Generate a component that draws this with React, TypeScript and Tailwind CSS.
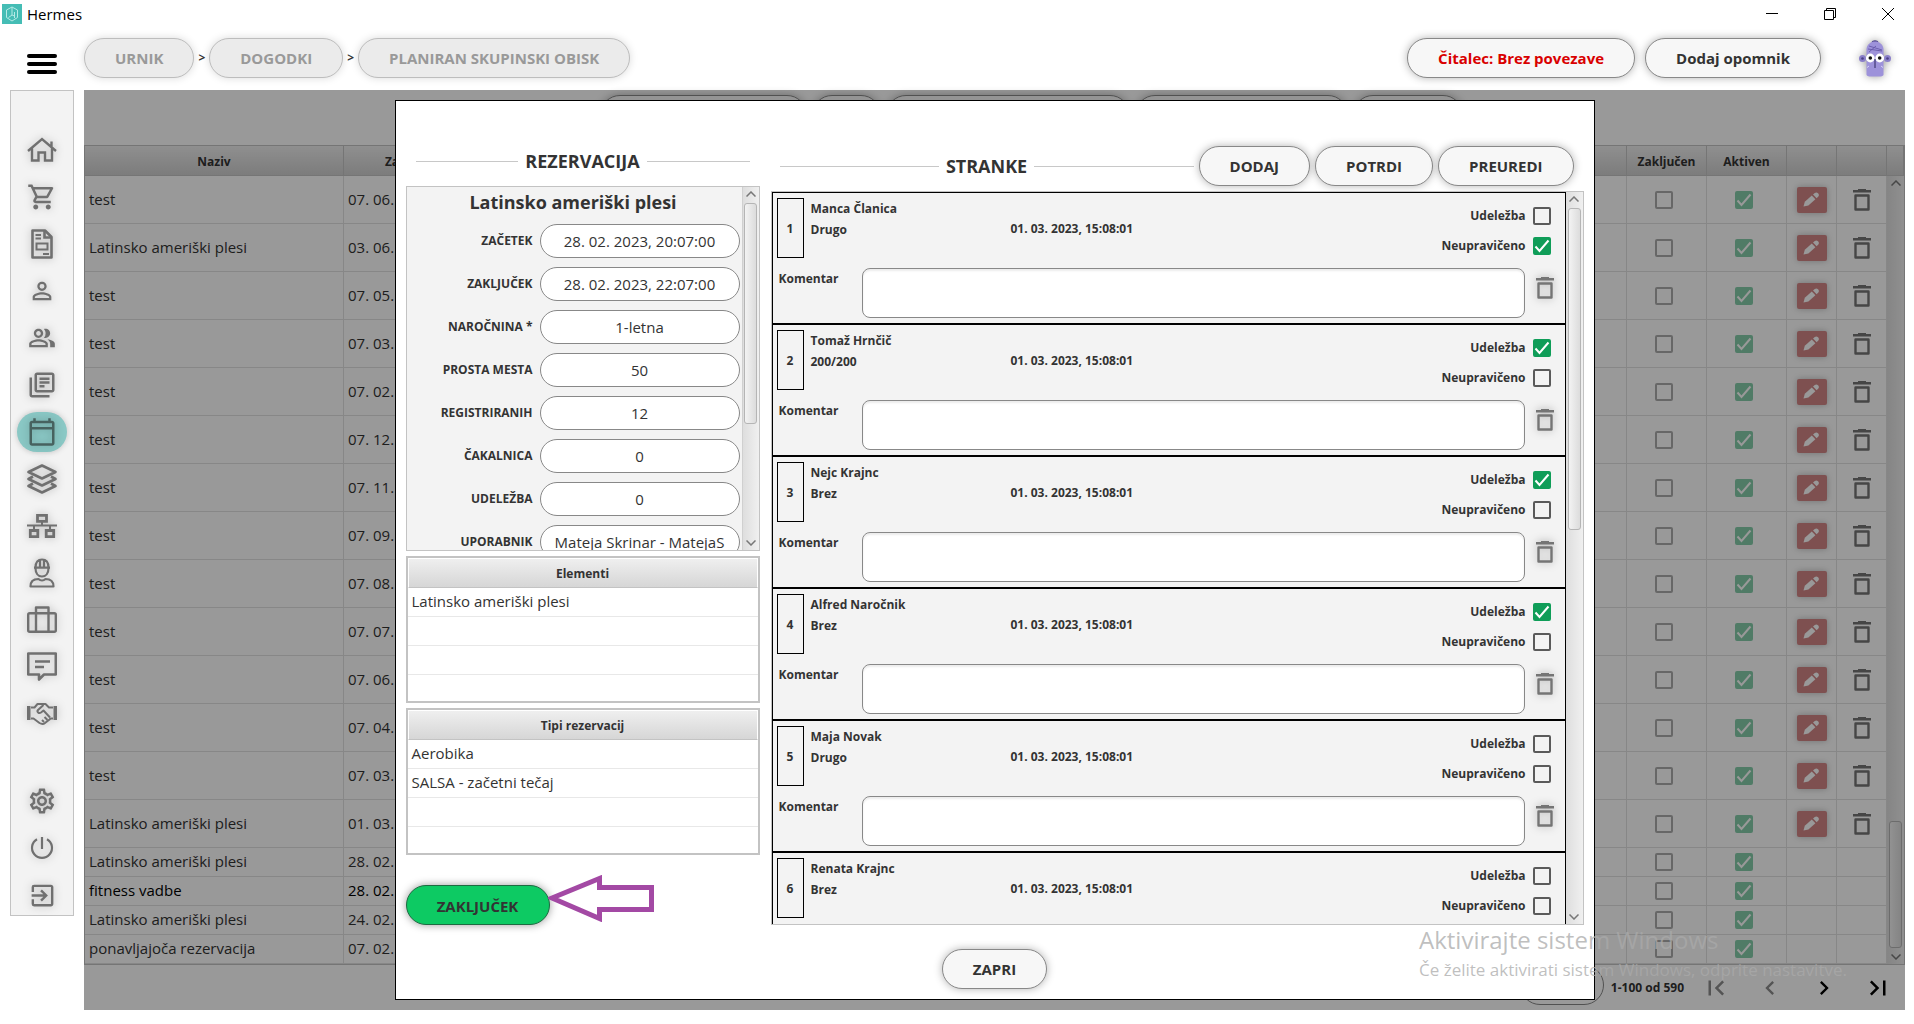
import type { ReactNode } from "react";
import {
  MdOutlineShoppingCart,
  MdPersonOutline,
  MdOutlinePeopleAlt,
  MdOutlineLibraryBooks,
  MdOutlineCalendarToday,
  MdOutlineSettings,
  MdExitToApp,
  MdFirstPage,
  MdLastPage,
  MdChevronLeft,
  MdChevronRight,
} from "react-icons/md";

type Termin = { naziv: string; zacetek: string; urejanje: boolean; poudarjen?: boolean };

const termini: Termin[] = [
  { naziv: "test", zacetek: "07. 06.", urejanje: true },
  { naziv: "Latinsko ameriški plesi", zacetek: "03. 06.", urejanje: true },
  { naziv: "test", zacetek: "07. 05.", urejanje: true },
  { naziv: "test", zacetek: "07. 03.", urejanje: true },
  { naziv: "test", zacetek: "07. 02.", urejanje: true },
  { naziv: "test", zacetek: "07. 12.", urejanje: true },
  { naziv: "test", zacetek: "07. 11.", urejanje: true },
  { naziv: "test", zacetek: "07. 09.", urejanje: true },
  { naziv: "test", zacetek: "07. 08.", urejanje: true },
  { naziv: "test", zacetek: "07. 07.", urejanje: true },
  { naziv: "test", zacetek: "07. 06.", urejanje: true },
  { naziv: "test", zacetek: "07. 04.", urejanje: true },
  { naziv: "test", zacetek: "07. 03.", urejanje: true },
  { naziv: "Latinsko ameriški plesi", zacetek: "01. 03.", urejanje: true },
  { naziv: "Latinsko ameriški plesi", zacetek: "28. 02.", urejanje: false },
  { naziv: "fitness vadbe", zacetek: "28. 02.", urejanje: false, poudarjen: true },
  { naziv: "Latinsko ameriški plesi", zacetek: "24. 02.", urejanje: false },
  { naziv: "ponavljajoča rezervacija", zacetek: "07. 02.", urejanje: false },
];

const polja = [
  { id: "zacetek", label: "ZAČETEK", value: "28. 02. 2023, 20:07:00" },
  { id: "zakljucek", label: "ZAKLJUČEK", value: "28. 02. 2023, 22:07:00" },
  { id: "narocnina", label: "NAROČNINA *", value: "1-letna" },
  { id: "prosta", label: "PROSTA MESTA", value: "50" },
  { id: "registriranih", label: "REGISTRIRANIH", value: "12" },
  { id: "cakalnica", label: "ČAKALNICA", value: "0" },
  { id: "udelezba", label: "UDELEŽBA", value: "0" },
  { id: "uporabnik", label: "UPORABNIK", value: "Mateja Skrinar - MatejaS" },
];

const stranke = [
  { ime: "Manca Članica", vrsta: "Drugo", udelezba: false, neupraviceno: true },
  { ime: "Tomaž Hrnčič", vrsta: "200/200", udelezba: true, neupraviceno: false },
  { ime: "Nejc Krajnc", vrsta: "Brez", udelezba: true, neupraviceno: false },
  { ime: "Alfred Naročnik", vrsta: "Brez", udelezba: true, neupraviceno: false },
  { ime: "Maja Novak", vrsta: "Drugo", udelezba: false, neupraviceno: false },
  { ime: "Renata Krajnc", vrsta: "Brez", udelezba: false, neupraviceno: false },
];

function HomeIcon() {
  return (
    <svg width="30" height="26" viewBox="0 0 30 26" fill="none" stroke="currentColor" strokeWidth="2.4">
      <path d="M1 14 15 2l14 12M24.500 10V4.500M5 11.500V23.500h6.500v-8h6.500v8H25V11.500" />
    </svg>
  );
}

function InvoiceIcon() {
  return (
    <svg width="22" height="30" viewBox="0 0 22 30" fill="none" stroke="currentColor" strokeWidth="2.6">
      <path d="M1.500 1.500H14L20.500 8v20.500h-19z" strokeLinejoin="round" />
      <path d="M13.500 2v6.500h7" />
      <path d="M4.500 6H10M4.500 9.500H10M12 25h6" strokeWidth="1.800" />
      <path d="M5.500 14.500h11v6h-11z" strokeWidth="2" />
    </svg>
  );
}

function LayersIcon() {
  return (
    <svg width="30" height="30" viewBox="0 0 30 30" fill="none" stroke="currentColor" strokeWidth="2.6" strokeLinejoin="round">
      <path d="M15 1.500 28.500 8 15 14.500 1.500 8z" />
      <path d="M6 12.500 1.500 15 15 21.500 28.500 15 24 12.500" />
      <path d="M6 19.500 1.500 22 15 28.500 28.500 22 24 19.500" />
    </svg>
  );
}

function NetworkIcon() {
  return (
    <svg width="30" height="26" viewBox="0 0 30 26" fill="none" stroke="currentColor" strokeWidth="2.8">
      <path d="M10.500 2.300h9v6h-9zM3.300 17.500h7.500v6.200H3.300zM19.200 17.500h7.500v6.200h-7.500z" />
      <path d="M15 8.500v4M7 12.500v5M23 12.500v5M0 12.500h30" strokeWidth="2" />
    </svg>
  );
}

function WorkerIcon() {
  return (
    <svg width="26" height="30" viewBox="0 0 26 30" fill="none" stroke="currentColor" strokeWidth="2.2">
      <path d="M6.500 9.500C6.500 4 9 1.500 13 1.500s6.500 2.500 6.500 8M5 9.700h16M11 2v7M15 2v7" />
      <path d="M6.500 10c0 5 2.500 8.500 6.500 8.500s6.500-3.500 6.500-8.500" />
      <path d="M1.500 28.500c0-4.500 2-7.500 8-7.500 2 1.800 5 1.800 7 0 6 0 8 3 8 7.500z" strokeLinejoin="round" />
    </svg>
  );
}

function SuitcaseIcon() {
  return (
    <svg width="30" height="28" viewBox="0 0 30 28" fill="none" stroke="currentColor" strokeWidth="2.4" strokeLinejoin="round">
      <rect x="1.200" y="7.200" width="27.600" height="18.600" rx="1.500" />
      <path d="M9 25.500V1.500h12.500v24" />
    </svg>
  );
}

function CommentIcon() {
  return (
    <svg width="30" height="30" viewBox="0 0 30 30" fill="none" stroke="currentColor" strokeWidth="2.600" strokeLinejoin="round">
      <path d="M1.200 1.500h27.600v21H17l-5 5v-5H1.200z" />
      <path d="M8 9.500h15M8 15h9" />
    </svg>
  );
}

function HandshakeIcon() {
  return (
    <svg width="30" height="24" viewBox="0 0 30 24" fill="none" stroke="currentColor" strokeWidth="2" strokeLinejoin="round">
      <path d="M0 4h3.500v14H0zM26.500 4H30v14h-3.500z" fill="currentColor" stroke="none" />
      <path d="M4 5.500h3.500l3-3.500h8l3.500 3.500h4M4 16.500h2.500l6 4.500c2 1.200 4 1.200 5.500 0l4.500-3.500 1-1H26" />
      <path d="M16.500 3 11 8c-1.500 1.800.8 4 3 2.500l2.500-2 6.500 7M17 20l-2-2M20.500 18l-3-3" />
    </svg>
  );
}

function PowerIcon() {
  return (
    <svg width="24" height="24" viewBox="0 0 24 24" fill="none" stroke="currentColor" strokeWidth="2.2">
      <path d="M12 1v12M7 3.200a10 10 0 1 0 10 0" />
    </svg>
  );
}

function TrashIcon() {
  return (
    <svg width="18" height="22" viewBox="0 0 18 22" aria-hidden="true">
      <path d="M5 0h8v1h5v2.500H0V1h5z" fill="currentColor" />
      <path d="M2.500 6.500h13v14h-13z" fill="none" stroke="currentColor" strokeWidth="2.400" strokeLinejoin="round" />
    </svg>
  );
}

function PencilIcon() {
  return (
    <svg width="17" height="16" viewBox="0 0 17 16" fill="white" aria-hidden="true">
      <path d="M.5 14.500 1.800 9.800 8.800 3.600 12.400 7.200 5.400 13.400z" />
      <path d="m10 2.600 1.800-1.500c1-.8 2.200-.8 3.200.1 1.100 1 1.200 2.400.3 3.400L13.700 6.200z" />
    </svg>
  );
}

function Avatar() {
  return (
    <svg width="32" height="38" viewBox="0 0 32 38" className="drop-shadow-[0_0_4px_rgba(0,0,0,0.4)]" aria-hidden="true">
      <circle cx="3.500" cy="19.500" r="3.500" fill="#8a7fc9" />
      <circle cx="28.500" cy="19.500" r="3.500" fill="#8a7fc9" />
      <circle cx="3.500" cy="19.500" r="1.300" fill="#4b4187" />
      <circle cx="28.500" cy="19.500" r="1.300" fill="#4b4187" />
      <path d="M12.500 3.500C13 .5 19 .5 19.500 3.500z" fill="#4b4187" />
      <path d="M7.500 10C8 5 12 2.500 16 2.500S24 5 24.500 10v25.500c0 1.500-2 2-4 2h-9c-2 0-4-.5-4-2z" fill="#9d92da" />
      <path d="M10 7l13 4M9 10l14 2M10 13l7-6" stroke="#6558a8" strokeWidth=".9" />
      <circle cx="11.300" cy="19" r="4.400" fill="#fff" />
      <circle cx="20.700" cy="19" r="4.400" fill="#fff" />
      <circle cx="11.300" cy="19" r="1.800" fill="#111" />
      <circle cx="20.700" cy="19" r="1.800" fill="#111" />
      <path d="M16 20v7M15 28h2" stroke="#2d2760" strokeWidth="1" fill="none" />
      <path d="M8 28.500l2-1.500M24 28.500l-2-1.500" stroke="#d9d4f5" strokeWidth="1" />
    </svg>
  );
}

type PillProps = { children?: ReactNode; className?: string; disabled?: boolean };

function PillButton({ children, className = "", disabled }: PillProps) {
  const look = disabled
    ? "border-[#bdbdbd] bg-[#ebebeb] text-[#999] shadow-[0_0_8px_rgba(0,0,0,0.15)]"
    : "border-[#888] bg-[#f7f7f7] shadow-[0_0_8px_rgba(0,0,0,0.3)]";
  return (
    <button
      type="button"
      disabled={disabled}
      className={`h-10 shrink-0 rounded-[20px] border px-[30px] text-[15px] font-bold whitespace-nowrap ${look} ${className}`}
    >
      {children}
    </button>
  );
}

function Checkbox({ checked, label, faded }: { checked: boolean; label: string; faded?: boolean }) {
  return (
    <span className={`grid size-[18px] ${faded ? "opacity-50" : ""}`}>
      <input
        type="checkbox"
        aria-label={label}
        defaultChecked={checked}
        className="peer col-start-1 row-start-1 size-[18px] appearance-none rounded-[2px] border-2 border-[#5a5a5a] checked:border-[#0f9d58] checked:bg-[#0f9d58]"
      />
      <svg
        viewBox="0 0 18 18"
        className="pointer-events-none invisible col-start-1 row-start-1 size-[18px] peer-checked:visible"
        fill="none"
        stroke="white"
        strokeWidth="2"
      >
        <path d="M2.500 9.500 6.500 14 15.500 3.500" />
      </svg>
    </span>
  );
}

function Chevron({ up }: { up?: boolean }) {
  return (
    <svg width="10" height="6" viewBox="0 0 10 6" fill="none" stroke="#777" strokeWidth="1.500" className="shrink-0">
      <path d={up ? "M.5 5.500 5 1l4.500 4.500" : "M.5.5 5 5 9.500.5"} />
    </svg>
  );
}

function Scrollbar({ thumb, className = "" }: { thumb: string; className?: string }) {
  return (
    <div className={`flex shrink-0 flex-col items-center gap-1.5 bg-linear-to-r from-[#dedede] to-[#f0f0f0] py-1 ${className}`}>
      <Chevron up />
      <div className="flex w-full flex-1 flex-col items-center">
        <div className={`w-[13px] rounded-[3px] border border-[#b5b5b5] bg-linear-to-r from-[#f3f3f3] to-[#dcdcdc] ${thumb}`} />
      </div>
      <Chevron />
    </div>
  );
}

function Heading({ children, className = "" }: { children: ReactNode; className?: string }) {
  return (
    <div className={`flex h-10 items-center gap-[7px] ${className}`}>
      <span className="h-px flex-1 bg-[#c8c8c8]" />
      <h2 className="text-[18px] leading-6 font-bold">{children}</h2>
      <span className="h-px flex-1 bg-[#c8c8c8]" />
    </div>
  );
}

function SmallTable({ title, rows }: { title: string; rows: string[] }) {
  return (
    <div className="h-[147px] shrink-0 overflow-hidden border-2 border-[#c3c3c3]">
      <table className="w-full border-separate border-spacing-0 text-[15px]">
        <thead>
          <tr>
            <th className="h-[30px] border border-x-white border-t-white border-b-[#c3c3c3] bg-linear-to-b from-[#efefef] to-[#d6d6d6] pt-0.5 text-[12px] font-bold">
              {title}
            </th>
          </tr>
        </thead>
        <tbody>
          {rows.map((r, i) => (
            <tr key={i}>
              <td className="h-[29px] border-b border-[#e8e8e8] px-1 pb-0.5 leading-5">{r}</td>
            </tr>
          ))}
        </tbody>
      </table>
    </div>
  );
}

function Sidebar() {
  const items = [
    { name: "Domov", icon: <HomeIcon /> },
    { name: "Blagajna", icon: <MdOutlineShoppingCart size={30} /> },
    { name: "Računi", icon: <InvoiceIcon /> },
    { name: "Stranke", icon: <MdPersonOutline size={28} /> },
    { name: "Skupine", icon: <MdOutlinePeopleAlt size={28} /> },
    { name: "Knjižnica", icon: <MdOutlineLibraryBooks size={30} /> },
    { name: "Urnik", icon: <MdOutlineCalendarToday size={30} />, active: true },
    { name: "Sloji", icon: <LayersIcon /> },
    { name: "Omrežje", icon: <NetworkIcon /> },
    { name: "Delavci", icon: <WorkerIcon /> },
    { name: "Kovček", icon: <SuitcaseIcon /> },
    { name: "Sporočila", icon: <CommentIcon /> },
    { name: "Partnerji", icon: <HandshakeIcon /> },
    { name: "Nastavitve", icon: <MdOutlineSettings size={30} />, gap: true },
    { name: "Izklop", icon: <PowerIcon /> },
    { name: "Odjava", icon: <MdExitToApp size={29} /> },
  ];
  return (
    <nav className="flex w-16 shrink-0 flex-col items-center gap-[7px] self-start border border-[#c3c3c3] bg-[#f3f3f3] pt-[39px]">
      {items.map((item) => (
        <button
          key={item.name}
          type="button"
          aria-label={item.name}
          className={`flex h-10 w-[50px] items-center justify-center rounded-[20px] ${
            item.active ? "bg-[#8ac8c5] text-[#47625f] shadow-[0_0_6px_rgba(0,0,0,0.2)]" : "text-[#707070]"
          } ${item.gap ? "mt-10" : ""}`}
        >
          <span className="drop-shadow-[0_0_4px_rgba(0,0,0,0.25)]">{item.icon}</span>
        </button>
      ))}
    </nav>
  );
}

function EventsTable() {
  const th = "h-[30px] border-r border-b border-[#c3c3c3] bg-linear-to-b from-[#efefef] to-[#cfcfcf] pt-0.5 text-[12px] font-bold";
  const td = "border-r border-b border-[#e2e2e2]";
  return (
    <div className="border border-[#c3c3c3]">
      <table className="w-full table-fixed border-separate border-spacing-0 text-[15px]">
        <thead>
          <tr>
            <th className={`w-[259px] ${th}`}>Naziv</th>
            <th className={`w-[130px] ${th}`}>Začetek</th>
            <th className={th} />
            <th className={`w-20 ${th}`}>Zaključen</th>
            <th className={`w-20 ${th}`}>Aktiven</th>
            <th className={`w-[50px] ${th}`} />
            <th className={`w-[50px] ${th}`} />
            <th className={`w-[17px] ${th}`} />
          </tr>
        </thead>
        <tbody>
          {termini.map((t, i) => (
            <tr key={i} className={`${t.urejanje ? "h-12" : "h-[29px]"} ${t.poudarjen ? "text-black" : ""}`}>
              <td className={`pb-0.5 pl-1 leading-5 ${td}`}>{t.naziv}</td>
              <td className={`pb-0.5 pl-1 leading-5 ${td}`}>{t.zacetek}</td>
              <td className={td} />
              <td className={`pr-1.5 ${td}`}>
                <div className="flex justify-center">
                  <Checkbox checked={false} label="Zaključen" faded />
                </div>
              </td>
              <td className={`pr-1.5 ${td}`}>
                <div className="flex justify-center">
                  <Checkbox checked label="Aktiven" faded />
                </div>
              </td>
              <td className={td}>
                {t.urejanje && (
                  <button
                    type="button"
                    aria-label="Uredi"
                    className="mx-auto flex h-[26px] w-[30px] items-center justify-center rounded-[2px] bg-[#d28686] shadow-[0_0_6px_rgba(0,0,0,0.25)]"
                  >
                    <PencilIcon />
                  </button>
                )}
              </td>
              <td className={td}>
                {t.urejanje && (
                  <button type="button" aria-label="Izbriši" className="mx-auto flex text-[#757575]">
                    <TrashIcon />
                  </button>
                )}
              </td>
              {i === 0 && (
                <td rowSpan={termini.length} className="h-px">
                  <Scrollbar className="h-[788px]" thumb="mt-auto h-[127px]" />
                </td>
              )}
            </tr>
          ))}
        </tbody>
      </table>
    </div>
  );
}

function ClientCard({ stranka, index }: { stranka: (typeof stranke)[number]; index: number }) {
  return (
    <div className="flex shrink-0 flex-col gap-2.5 border border-black bg-[#f3f3f3] px-1 py-[5px] text-[12px] font-bold">
      <div className="flex h-[60px] items-center">
        <div className="flex h-[60px] w-[27px] items-center justify-center border border-black pt-0.5">{index + 1}</div>
        <div className="ml-[7px] w-[200px] self-start leading-[21px]">
          <div>{stranka.ime}</div>
          <div>{stranka.vrsta}</div>
        </div>
        <div className="pt-0.5">01. 03. 2023, 15:08:01</div>
        <div className="ml-auto flex flex-col gap-3 self-start pt-[9px] pr-2.5">
          <label className="flex h-[18px] items-center justify-end gap-[7px]">
            Udeležba
            <Checkbox checked={stranka.udelezba} label="Udeležba" />
          </label>
          <label className="flex h-[18px] items-center justify-end gap-[7px]">
            Neupravičeno
            <Checkbox checked={stranka.neupraviceno} label="Neupravičeno" />
          </label>
        </div>
      </div>
      <div className="flex items-start">
        <label htmlFor={`komentar-${index}`} className="w-[85px] pl-0.5 leading-[21px]">
          Komentar
        </label>
        <textarea
          id={`komentar-${index}`}
          className="h-[50px] flex-1 resize-none rounded-lg border border-[#888] bg-white p-2 shadow-[inset_0_2px_2px_rgba(0,0,0,0.08)]"
        />
        <button
          type="button"
          aria-label="Odstrani stranko"
          className="mt-[9px] mr-[7px] ml-[11px] text-[#757575] drop-shadow-[0_0_4px_rgba(0,0,0,0.3)]"
        >
          <TrashIcon />
        </button>
      </div>
    </div>
  );
}

function ReservationDialog() {
  return (
    <div role="dialog" aria-label="Rezervacija" className="flex w-[1200px] flex-col border border-black bg-white px-2.5 pt-10 pb-2.5">
      <div className="flex min-h-0 flex-1 gap-[11px]">
        {/* left column */}
        <div className="flex w-[354px] shrink-0 flex-col">
          <Heading className="mb-[5px] px-2.5">REZERVACIJA</Heading>
          <div className="mb-[5px] flex min-h-0 flex-1 overflow-hidden border border-[#c3c3c3] bg-[#f3f3f3]">
            <div className="flex-1 pr-0.5">
              <h3 className="h-[37px] pt-[3px] text-center text-[18px] leading-6 font-bold">Latinsko ameriški plesi</h3>
              <div className="flex flex-col gap-[9px]">
                {polja.map((p) => (
                  <div key={p.id} className="flex items-center justify-end gap-[7px]">
                    <label htmlFor={p.id} className="text-[12px] font-bold">
                      {p.label}
                    </label>
                    <input
                      id={p.id}
                      defaultValue={p.value}
                      className="h-[34px] w-[200px] rounded-[17px] border border-[#888] bg-white text-center text-[15px]"
                    />
                  </div>
                ))}
              </div>
            </div>
            <Scrollbar className="w-[17px] border-l border-[#d0d0d0]" thumb="h-[221px]" />
          </div>
          <div className="mb-[30px] flex flex-col gap-[5px]">
            <SmallTable title="Elementi" rows={["Latinsko ameriški plesi", "", "", ""]} />
            <SmallTable title="Tipi rezervacij" rows={["Aerobika", "SALSA - začetni tečaj", "", ""]} />
          </div>
          <div className="flex h-10 shrink-0 items-start">
            <button
              type="button"
              className="h-10 w-36 rounded-[20px] border border-[#1d6b41] bg-[#0dca63] pt-0.5 text-[15px] font-bold shadow-[0_0_8px_rgba(0,0,0,0.4)]"
            >
              ZAKLJUČEK
            </button>
            <svg width="106" height="47" viewBox="0 0 106 47" className="-mt-2.5 -ml-0.5" aria-hidden="true">
              <path d="M4 23 51.500 3.500V12.500H103.500V34.500H51.500V43.500z" fill="white" stroke="#a349a4" strokeWidth="5" />
            </svg>
          </div>
        </div>

        {/* right column */}
        <div className="flex min-w-0 flex-1 flex-col gap-[5px] pt-[5px]">
          <div className="flex gap-[5px] pr-2.5">
            <Heading className="flex-1 pl-[9px]">STRANKE</Heading>
            <PillButton>DODAJ</PillButton>
            <PillButton>POTRDI</PillButton>
            <PillButton>PREUREDI</PillButton>
          </div>
          <div className="flex min-h-0 flex-1 overflow-hidden border border-[#c3c3c3]">
            <div className="flex flex-1 flex-col">
              {stranke.map((s, i) => (
                <ClientCard key={s.ime} stranka={s} index={i} />
              ))}
            </div>
            <Scrollbar className="w-[17px]" thumb="h-[322px]" />
          </div>
        </div>
      </div>
      <div className="mt-6 flex justify-center">
        <PillButton>ZAPRI</PillButton>
      </div>
    </div>
  );
}

export default function App() {
  return (
    <div className="relative flex min-h-screen flex-col bg-white font-['Open_Sans','Noto_Sans',sans-serif] text-[#333]">
      {/* window title bar */}
      <div className="flex h-7 items-center pl-0.5 text-black">
        <svg width="20" height="20" viewBox="0 0 20 20" fill="none" stroke="#b5ebe6" aria-hidden="true">
          <path d="M0 0h20v20H0z" fill="#45bdb5" stroke="none" />
          <path d="M10 3 4.500 6v7.500L10 17l5.500-3.500V6zM10 3v8L6.500 13.500M12.500 8v6M10 11l2.500 1" />
        </svg>
        <span className="ml-[5px] text-[15px] leading-5">Hermes</span>
        <div className="ml-auto flex gap-1.5">
          <button type="button" aria-label="Pomanjšaj" className="flex h-7 w-[52px] items-center justify-center">
            <svg width="12" height="12" viewBox="0 0 12 12" stroke="currentColor">
              <path d="M0 5.500h12" />
            </svg>
          </button>
          <button type="button" aria-label="Obnovi" className="flex h-7 w-[52px] items-center justify-center">
            <svg width="12" height="12" viewBox="0 0 12 12" fill="none" stroke="currentColor">
              <path d="M.5 2.500h9v9h-9zM2.500 2.500v-2h9v9h-2" />
            </svg>
          </button>
          <button type="button" aria-label="Zapri okno" className="flex h-7 w-[52px] items-center justify-center">
            <svg width="12" height="12" viewBox="0 0 12 12" stroke="currentColor">
              <path d="M0 0l12 12M12 0 0 12" />
            </svg>
          </button>
        </div>
      </div>

      {/* header */}
      <header className="flex items-center pt-2.5 pr-[23px] pb-3 pl-[27px]">
        <button type="button" aria-label="Meni" className="mt-3 mr-[27px] flex w-[30px] flex-col gap-1">
          <span className="h-1 rounded-sm bg-black" />
          <span className="h-1 rounded-sm bg-black" />
          <span className="h-1 rounded-sm bg-black" />
        </button>
        <div className="flex items-center gap-1 text-[12px] font-bold">
          <PillButton disabled>URNIK</PillButton>
          <span>&gt;</span>
          <PillButton disabled>DOGODKI</PillButton>
          <span>&gt;</span>
          <PillButton disabled>PLANIRAN SKUPINSKI OBISK</PillButton>
        </div>
        <div className="ml-auto flex items-center gap-2.5">
          <PillButton className="text-[#d90000]">Čitalec: Brez povezave</PillButton>
          <PillButton>Dodaj opomnik</PillButton>
          <button type="button" aria-label="Profil" className="ml-7">
            <Avatar />
          </button>
        </div>
      </header>

      <div className="flex flex-1 gap-2.5 pr-[9px] pb-3.5 pl-2.5">
        <Sidebar />
        <main className="relative min-w-0 flex-1">
          <div className="flex justify-center gap-[5px] pt-[5px] pb-2.5 pl-[74px]">
            <PillButton className="w-[207px]" />
            <PillButton className="w-[69px]" />
            <PillButton className="w-[244px]" />
            <PillButton className="w-[213px]" />
            <PillButton className="w-[110px]" />
          </div>
          <EventsTable />
          <div className="flex h-[45px] items-start justify-end">
            <select aria-label="Vrstic na stran" className="h-10 w-[84px] appearance-none rounded-[20px] border border-[#888] bg-white" />
            <div className="ml-[7px] flex h-10 items-center pt-1.5">
              <span className="mr-[5px] text-[12px] font-bold">1-100 od 590</span>
              <button type="button" aria-label="Prva stran" className="flex w-[54px] justify-center text-[#8c8c8c]">
                <MdFirstPage size={30} />
              </button>
              <button type="button" aria-label="Prejšnja stran" className="flex w-[54px] justify-center text-[#8c8c8c]">
                <MdChevronLeft size={28} />
              </button>
              <button type="button" aria-label="Naslednja stran" className="flex w-[54px] justify-center text-black">
                <MdChevronRight size={28} />
              </button>
              <button type="button" aria-label="Zadnja stran" className="flex w-[54px] justify-center text-black">
                <MdLastPage size={30} />
              </button>
            </div>
          </div>

          {/* modal over the table */}
          <div className="absolute inset-0 flex justify-center bg-black/40 py-2.5">
            <ReservationDialog />
          </div>
        </main>
      </div>

      {/* system activation notice */}
      <div className="pointer-events-none absolute bottom-[39px] left-[1419px] text-[#aaa]/75">
        <p className="text-[24px] leading-[30px]">Aktivirajte sistem Windows</p>
        <p className="text-[17px] leading-[30px]">Če želite aktivirati sistem Windows, odprite nastavitve.</p>
      </div>
    </div>
  );
}
